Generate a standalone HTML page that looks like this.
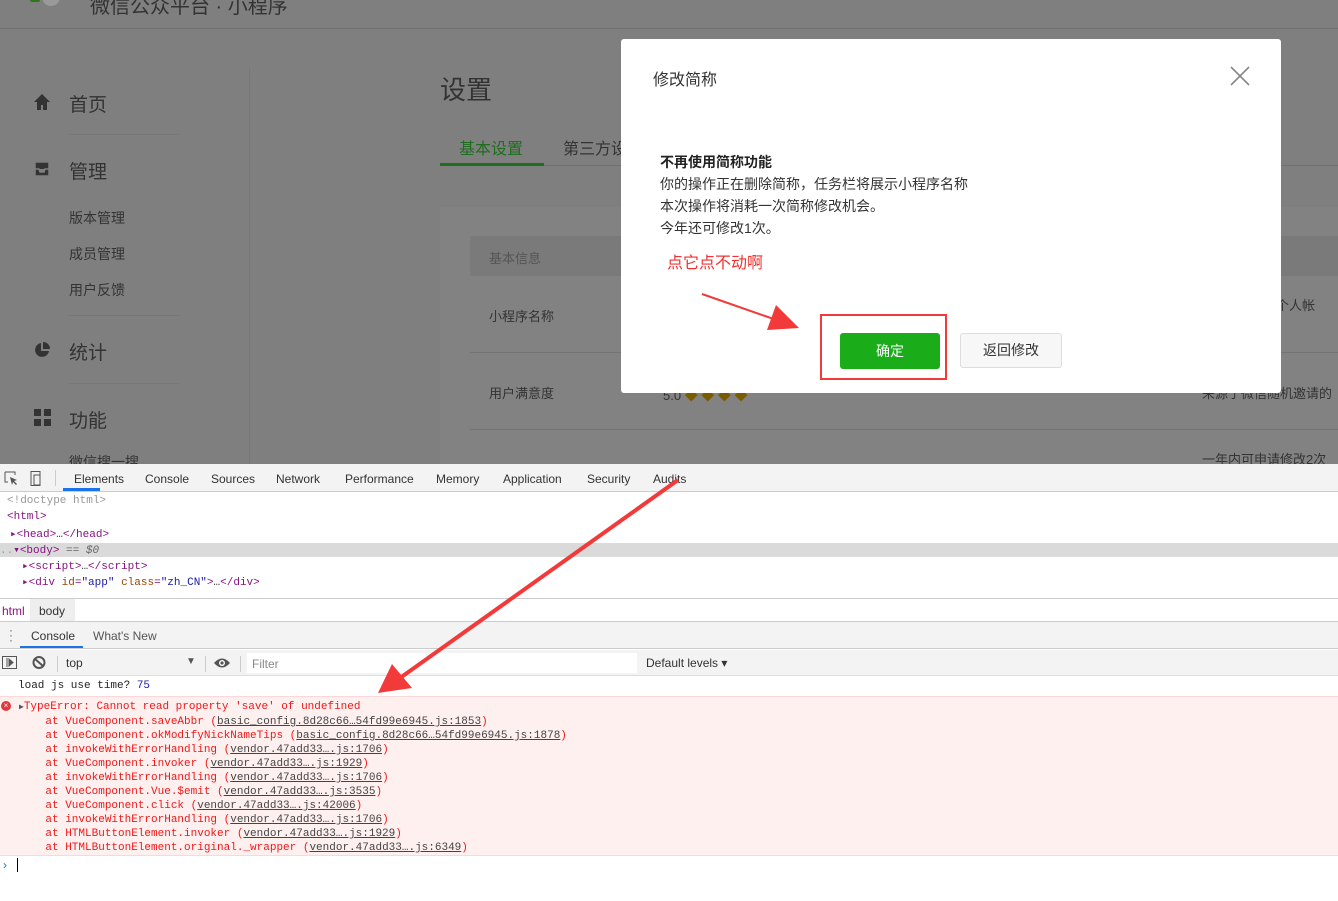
<!DOCTYPE html>
<html><head><meta charset="utf-8"><style>
*{margin:0;padding:0;box-sizing:border-box}
body{width:1338px;height:901px;overflow:hidden;background:#fff;font-family:"Liberation Sans","Noto Sans CJK SC",sans-serif;position:relative}
.a{position:absolute;white-space:nowrap}
.ov{position:absolute;left:0;top:0;width:1338px;height:464px;background:#7f7f7f;overflow:hidden}
.dim{color:#333}
.mono{font-family:"Liberation Mono","DejaVu Sans Mono",monospace;font-size:11px}
.tag{color:#881280}.at{color:#994500}.av{color:#1a1aa6}.g{color:#999}
.err{color:#f01818}.err u{color:#444}
</style></head><body>
<div class="ov">
 <div class="a" style="left:0;top:28px;width:1338px;height:1px;background:#717171"></div>
 <div class="a" style="left:30px;top:-8px;width:10px;height:10px;background:#2a7a1a;border-radius:2px"></div>
 <div class="a" style="left:42px;top:-12px;width:18px;height:18px;background:#999;border-radius:50%"></div>
 <div class="a" style="left:90px;top:-10px;font-size:20px;color:#333">微信公众平台 · 小程序</div>
 <div class="a" style="left:249px;top:68px;width:1px;height:400px;background:#777"></div>
 <svg class="a" style="left:33px;top:93px" width="18" height="18"><path d="M9 1L1 9h3v8h4v-5h2v5h4V9h3z" fill="#333"/></svg>
 <div class="a dim" style="left:69px;top:90px;font-size:19px">首页</div>
 <div class="a" style="left:69px;top:134px;width:110px;height:1px;background:#777"></div>
 <svg class="a" style="left:33px;top:160px" width="18" height="18"><path d="M2 2h14v14H2z M2 9h4l1 3h4l1-3h4" fill="#333" stroke="#7f7f7f" stroke-width="1.5"/></svg>
 <div class="a dim" style="left:69px;top:157px;font-size:19px">管理</div>
 <div class="a dim" style="left:69px;top:208px;font-size:14px">版本管理</div>
 <div class="a dim" style="left:69px;top:244px;font-size:14px">成员管理</div>
 <div class="a dim" style="left:69px;top:280px;font-size:14px">用户反馈</div>
 <div class="a" style="left:69px;top:315px;width:110px;height:1px;background:#777"></div>
 <svg class="a" style="left:33px;top:341px" width="18" height="18"><path d="M8 2A7 7 0 1 0 16 10H8z" fill="#333"/><path d="M10 1v7h7A7 7 0 0 0 10 1z" fill="#333"/></svg>
 <div class="a dim" style="left:69px;top:338px;font-size:19px">统计</div>
 <div class="a" style="left:69px;top:383px;width:110px;height:1px;background:#777"></div>
 <svg class="a" style="left:34px;top:409px" width="18" height="18"><rect x="0" y="0" width="7" height="7" fill="#333"/><rect x="10" y="0" width="7" height="7" fill="#333"/><rect x="0" y="10" width="7" height="7" fill="#333"/><rect x="10" y="10" width="7" height="7" fill="#333"/></svg>
 <div class="a dim" style="left:69px;top:406px;font-size:19px">功能</div>
 <div class="a dim" style="left:69px;top:452px;font-size:14px">微信搜一搜</div>
 <div class="a dim" style="left:440px;top:70px;font-size:26px">设置</div>
 <div class="a" style="left:459px;top:135px;font-size:16px;color:#1e6e1e">基本设置</div>
 <div class="a dim" style="left:563px;top:135px;font-size:16px">第三方设置</div>
 <div class="a" style="left:440px;top:165px;width:900px;height:1px;background:#717171"></div>
 <div class="a" style="left:440px;top:163px;width:104px;height:3px;background:#1e6e1e"></div>
 <div class="a" style="left:440px;top:207px;width:900px;height:270px;background:#828282"></div>
 <div class="a" style="left:470px;top:236px;width:870px;height:40px;background:#7a7a7a"></div>
 <div class="a" style="left:489px;top:248px;font-size:13px;color:#555">基本信息</div>
 <div class="a dim" style="left:489px;top:306px;font-size:13px">小程序名称</div>
 <div class="a" style="left:470px;top:352px;width:870px;height:1px;background:#737373"></div>
 <div class="a dim" style="left:489px;top:383px;font-size:13px">用户满意度</div>
 <div class="a" style="left:470px;top:429px;width:870px;height:1px;background:#737373"></div>
 <div class="a dim" style="left:1250px;top:295px;font-size:13px">后，个人帐</div>
 <div class="a dim" style="left:1202px;top:383px;font-size:13px">来源于微信随机邀请的</div>
 <div class="a dim" style="left:1202px;top:449px;font-size:13px">一年内可申请修改2次</div>
 <div class="a" style="left:663px;top:385px;font-size:13px;color:#333">5.0 <span style="color:#7a5c00">◆ ◆ ◆ ◆</span></div>
</div>
<!-- dialog -->
<div class="a" style="left:621px;top:39px;width:660px;height:354px;background:#fff;border-radius:3px">
 <div class="a" style="left:32px;top:27px;font-size:16px;color:#333">修改简称</div>
 <svg class="a" style="left:609px;top:27px" width="20" height="20"><path d="M1 1L19 19M19 1L1 19" stroke="#888" stroke-width="1.6"/></svg>
 <div class="a" style="left:39px;top:113px;font-size:14px;font-weight:bold;color:#222">不再使用简称功能</div>
 <div class="a" style="left:39px;top:135px;font-size:14px;color:#333">你的操作正在删除简称，任务栏将展示小程序名称</div>
 <div class="a" style="left:39px;top:157px;font-size:14px;color:#333">本次操作将消耗一次简称修改机会。</div>
 <div class="a" style="left:39px;top:179px;font-size:14px;color:#333">今年还可修改1次。</div>
 <div class="a" style="left:46px;top:210px;font-size:16px;color:#f23030">点它点不动啊</div>
 <div class="a" style="left:199px;top:275px;width:127px;height:66px;border:2px solid #f23a3a"></div>
 <div class="a" style="left:219px;top:294px;width:100px;height:36px;background:#1aad19;border-radius:3px;color:#fff;font-size:14px;text-align:center;line-height:36px">确定</div>
 <div class="a" style="left:339px;top:294px;width:102px;height:35px;background:#f7f7f7;border:1px solid #ddd;border-radius:3px;color:#333;font-size:14px;text-align:center;line-height:33px">返回修改</div>
</div>
<!-- devtools -->
<div class="a" style="left:0;top:464px;width:1338px;height:28px;background:#f3f3f3;border-bottom:1px solid #ccc"></div>
<svg class="a" style="left:4px;top:471px" width="40" height="16"><path d="M1 1h10v3M1 1v10h3" fill="none" stroke="#555"/><path d="M6 6l7 3-3 1 3 3-1 1-3-3-1 3z" fill="#555"/><rect x="27" y="0.5" width="9" height="14" fill="none" stroke="#555"/><rect x="30" y="4" width="6" height="10" fill="none" stroke="#555"/></svg>
<div class="a" style="left:55px;top:470px;width:1px;height:16px;background:#ccc"></div>
<div class="a" style="left:63px;top:472px;font-size:12px;color:#333">
<span style="position:absolute;left:11px">Elements</span><span style="position:absolute;left:82px">Console</span><span style="position:absolute;left:148px">Sources</span><span style="position:absolute;left:213px">Network</span><span style="position:absolute;left:282px">Performance</span><span style="position:absolute;left:373px">Memory</span><span style="position:absolute;left:440px">Application</span><span style="position:absolute;left:524px">Security</span><span style="position:absolute;left:590px">Audits</span></div>
<div class="a" style="left:63px;top:488px;width:37px;height:3px;background:#1a73e8"></div>
<div class="a" style="left:0;top:543px;width:1338px;height:14px;background:#dadada"></div>
<div class="a mono g" style="left:7px;top:495px">&lt;!doctype html&gt;</div>
<div class="a mono tag" style="left:7px;top:511px">&lt;html&gt;</div>
<div class="a mono tag" style="left:10px;top:527px">▸&lt;head&gt;<span style="color:#333">…</span>&lt;/head&gt;</div>
<div class="a mono tag" style="left:0;top:543px"><span class="g">..</span>▾&lt;body&gt; <span style="color:#666">== <i>$0</i></span></div>
<div class="a mono tag" style="left:22px;top:559px">▸&lt;script&gt;<span style="color:#333">…</span>&lt;/script&gt;</div>
<div class="a mono tag" style="left:22px;top:575px">▸&lt;div <span class="at">id</span>=<span class="av">"app"</span> <span class="at">class</span>=<span class="av">"zh_CN"</span>&gt;<span style="color:#333">…</span>&lt;/div&gt;</div>
<div class="a" style="left:0;top:598px;width:1338px;height:24px;background:#fff;border-top:1px solid #ccc;border-bottom:1px solid #ccc"></div>
<div class="a" style="left:2px;top:604px;font-size:12px;color:#881280">html</div>
<div class="a" style="left:30px;top:599px;width:45px;height:22px;background:#eee"></div>
<div class="a" style="left:39px;top:604px;font-size:12px;color:#333">body</div>
<div class="a" style="left:0;top:622px;width:1338px;height:27px;background:#f3f3f3;border-bottom:1px solid #ccc"></div>
<div class="a" style="left:9px;top:628px;font-size:12px;color:#666;line-height:5px">·<br>·<br>·</div>
<div class="a" style="left:31px;top:629px;font-size:12px;color:#333">Console</div>
<div class="a" style="left:93px;top:629px;font-size:12px;color:#555">What's New</div>
<div class="a" style="left:20px;top:646px;width:63px;height:2px;background:#1a73e8"></div>
<div class="a" style="left:0;top:650px;width:1338px;height:26px;background:#f3f3f3;border-bottom:1px solid #ddd"></div>
<svg class="a" style="left:2px;top:655px" width="50" height="16"><rect x="0.5" y="1.5" width="14" height="12" fill="none" stroke="#555"/><path d="M5 3v9M7 4l4 3.5-4 3.5z" fill="#555" stroke="#555"/><circle cx="37" cy="7.5" r="5.5" fill="none" stroke="#555" stroke-width="2"/><path d="M33 4l8 7" stroke="#555" stroke-width="2"/></svg>
<div class="a" style="left:57px;top:656px;width:1px;height:16px;background:#ccc"></div>
<div class="a" style="left:66px;top:656px;font-size:12px;color:#333">top</div>
<div class="a" style="left:186px;top:656px;font-size:10px;color:#555">▼</div>
<div class="a" style="left:205px;top:656px;width:1px;height:16px;background:#ccc"></div>
<svg class="a" style="left:213px;top:656px" width="18" height="14"><path d="M1 7Q9-2 17 7Q9 16 1 7z" fill="#555"/><circle cx="9" cy="7" r="3" fill="#fff"/><circle cx="9" cy="7" r="1.6" fill="#555"/></svg>
<div class="a" style="left:240px;top:656px;width:1px;height:16px;background:#ccc"></div>
<div class="a" style="left:247px;top:653px;width:390px;height:20px;background:#fff"></div>
<div class="a" style="left:252px;top:657px;font-size:12px;color:#888">Filter</div>
<div class="a" style="left:646px;top:656px;font-size:12px;color:#333">Default levels ▾</div>
<div class="a mono" style="left:18px;top:680px;color:#222">load js use time? <span style="color:#1a1aa6">75</span></div>
<div class="a" style="left:0;top:696px;width:1338px;height:160px;background:#fff0f0;border-top:1px solid #fbd7d7;border-bottom:1px solid #fbd7d7"></div>
<div class="a" style="left:1px;top:701px;width:10px;height:10px;border-radius:50%;background:#e0393e;color:#fff;font-size:8px;line-height:10px;text-align:center">×</div>
<div class="a mono err" style="left:19px;top:700px;line-height:14px;white-space:pre"><span style="color:#555;font-size:8px">▶</span>TypeError: Cannot read property 'save' of undefined
    at VueComponent.saveAbbr (<u>basic_config.8d28c66…54fd99e6945.js:1853</u>)
    at VueComponent.okModifyNickNameTips (<u>basic_config.8d28c66…54fd99e6945.js:1878</u>)
    at invokeWithErrorHandling (<u>vendor.47add33….js:1706</u>)
    at VueComponent.invoker (<u>vendor.47add33….js:1929</u>)
    at invokeWithErrorHandling (<u>vendor.47add33….js:1706</u>)
    at VueComponent.Vue.$emit (<u>vendor.47add33….js:3535</u>)
    at VueComponent.click (<u>vendor.47add33….js:42006</u>)
    at invokeWithErrorHandling (<u>vendor.47add33….js:1706</u>)
    at HTMLButtonElement.invoker (<u>vendor.47add33….js:1929</u>)
    at HTMLButtonElement.original._wrapper (<u>vendor.47add33….js:6349</u>)</div>
<div class="a" style="left:3px;top:858px;font-size:12px;color:#1a73e8">›</div>
<div class="a" style="left:17px;top:858px;width:1px;height:14px;background:#000"></div>
<!-- arrows -->
<svg class="a" style="left:0;top:0" width="1338" height="901">
 <path d="M702 294L785 323" stroke="#f23a3a" stroke-width="2"/>
 <path d="M799 328L776 305L767 330z" fill="#f23a3a"/>
 <path d="M678 480L400 678" stroke="#f23a3a" stroke-width="4"/>
 <path d="M378 693L392 664L412 688z" fill="#f23a3a"/>
</svg>
</body></html>
